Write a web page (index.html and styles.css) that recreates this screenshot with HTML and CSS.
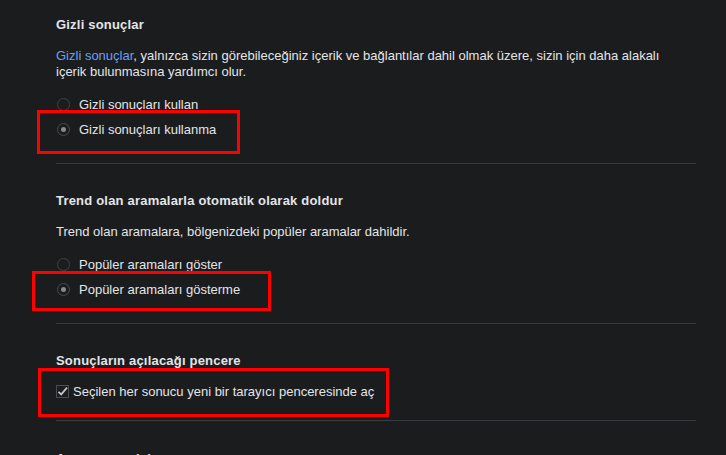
FILE: index.html
```html
<!DOCTYPE html>
<html lang="tr">
<head>
    <meta charset="UTF-8">
    <meta name="viewport" content="width=device-width, initial-scale=1.0">
    <title>Arama ayarları</title>
    <link rel="stylesheet" href="styles.css">
</head>
<body>

    <div class="settings">
        <div class="section first">
            <h2>Gizli sonuçlar</h2>
            <p class="desc"><a href="#" class="link">Gizli sonuçlar</a>, yalnızca sizin görebileceğiniz içerik ve bağlantılar dahil olmak üzere, sizin için daha alakalı içerik bulunmasına yardımcı olur.</p>
            <div class="options">
                <label class="option"><span class="radio"></span>Gizli sonuçları kullan</label>
                <label class="option"><span class="radio checked"></span>Gizli sonuçları kullanma</label>
                <div class="mark mark-1"></div>
            </div>
        </div>

        <div class="section">
            <h2>Trend olan aramalarla otomatik olarak doldur</h2>
            <p class="desc">Trend olan aramalara, bölgenizdeki popüler aramalar dahildir.</p>
            <div class="options">
                <label class="option"><span class="radio"></span>Popüler aramaları göster</label>
                <label class="option"><span class="radio checked"></span>Popüler aramaları gösterme</label>
                <div class="mark mark-2"></div>
            </div>
        </div>

        <div class="section short">
            <h2>Sonuçların açılacağı pencere</h2>
            <div class="options tight">
                <label class="option check">
                    <svg class="checkbox" width="13" height="13" viewBox="0 0 13 13">
                        <rect x="0.5" y="0.5" width="12" height="12" fill="none" stroke="#4a4c50"/>
                        <path d="M2.5 6.8 L5.2 9.4 L11 2.6" fill="none" stroke="#c4c6c9" stroke-width="1.7"/>
                    </svg>Seçilen her sonucu yeni bir tarayıcı penceresinde aç</label>
                <div class="mark mark-3"></div>
            </div>
        </div>

        <div class="section last">
            <h2>Arama geçmişi</h2>
        </div>
    </div>

</body>
</html>
```

FILE: styles.css
```css
body {
    margin: 0;
    font-family: "Liberation Sans", Arial, sans-serif;
    font-size: 13px;
    background-color: #1b1c1e;
    color: #e3e5e8;
    overflow: hidden;
}
.settings {
    padding-left: 56px;
    width: 640px;
}
.section {
    padding: 29px 0 21px;
    border-bottom: 1px solid #3a3c3f;
}
.section.first {
    padding-top: 17px;
}
.section.short {
    padding-bottom: 16px;
}
.section.last {
    border-bottom: none;
    padding-top: 30px;
}
h2 {
    font-size: 13px;
    font-weight: bold;
    line-height: 16px;
    letter-spacing: 0.2px;
    margin: 0;
}
.desc {
    margin: 15px 0 0;
    line-height: 16px;
    max-width: 625px;
}
.link {
    color: #6c9ef8;
    text-decoration: none;
}
.options {
    position: relative;
    margin-top: 12px;
}
.options.tight {
    margin-top: 10px;
}
.option {
    display: flex;
    align-items: center;
    height: 25px;
}
.radio {
    width: 11px;
    height: 11px;
    border: 1px solid #404246;
    border-radius: 50%;
    margin: 0 9px 0 1px;
    display: flex;
    align-items: center;
    justify-content: center;
}
.radio.checked {
    border-color: #4a4c4f;
}
.radio.checked::after {
    content: "";
    width: 5px;
    height: 5px;
    border-radius: 50%;
    background: #8a8a8a;
}
.checkbox {
    margin-right: 4px;
}
/* red highlight boxes drawn over the screenshot */
.mark {
    position: absolute;
    border: 3px solid #ff0000;
}
.mark-1 {
    left: -19px;
    top: 18px;
    width: 197px;
    height: 38px;
}
.mark-2 {
    left: -24px;
    top: 19px;
    width: 233px;
    height: 34px;
}
.mark-3 {
    left: -18px;
    top: -11px;
    width: 345px;
    height: 43px;
}
```
